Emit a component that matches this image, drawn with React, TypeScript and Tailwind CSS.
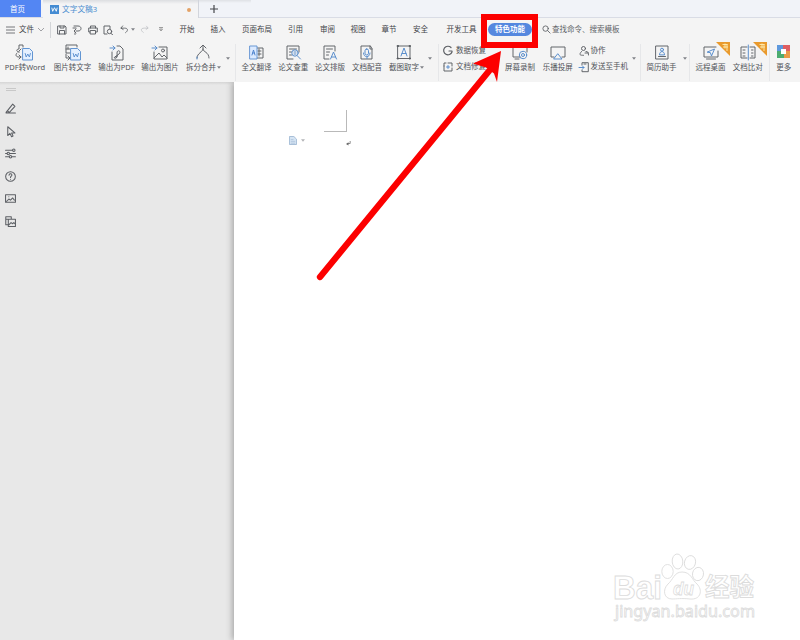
import React from "react";

type Kids = { children?: React.ReactNode };

const Icon = ({ children, className = "h-[18px] w-[20px]", box = "0 0 20 18" }: Kids & { className?: string; box?: string }) => (
  <svg viewBox={box} className={"shrink-0 overflow-visible " + className} fill="none" stroke="#5c5f64" strokeWidth=".95" strokeLinecap="round" strokeLinejoin="round">
    {children}
  </svg>
);

const Small = ({ children, className = "h-[10px] w-[10px]" }: Kids & { className?: string }) => (
  <Icon box="0 0 10 10" className={className}>{children}</Icon>
);

const Caret = ({ className = "" }: { className?: string }) => (
  <svg viewBox="0 0 4 3" className={"h-[3px] w-[4px] shrink-0 " + className}>
    <path d="M0 .3h4L2 2.7z" fill="#808388" />
  </svg>
);

const Tool = ({ label, width, caret, children }: Kids & { label: string; width: string; caret?: boolean }) => (
  <div className={"flex shrink-0 flex-col items-center " + width}>
    {children}
    <div className="relative h-[11px] whitespace-nowrap leading-[11px]">
      {label}
      {caret && <Caret className="absolute -right-[5px] top-[4px]" />}
    </div>
  </div>
);

const Drop = ({ width }: { width: string }) => (
  <div className={"flex h-[28px] shrink-0 items-center justify-center " + width}><Caret /></div>
);

const Sep = () => <div className="h-[37px] w-px shrink-0 bg-[#e6e7e9]" />;

const WordPage = () => (
  <g stroke="#5b8fd0">
    <path d="M8 4.5h6.5l3 3v8.5H8z" fill="#e4f0ff" />
    <path d="M10.2 9.5l1 3.5 1.6-3 1.6 3 1-3.5" />
  </g>
);

const Ribbon = () => (
  <div className="w-[11px] shrink-0">
    <svg viewBox="0 0 14 14" className="h-[14px] w-[14px]">
      <path d="M0 0h14v14z" fill="#e99a2d" />
      <path d="M6.5 2.5h5M7 5h5M9 1.5v5M11 2v7" stroke="#ffedb2" strokeWidth=".9" />
    </svg>
  </div>
);

function TabBar() {
  return (
    <div className="flex h-[18px] shrink-0 border-b border-[#d9dce5] bg-[#f1f3f8]">
      <div className="flex h-[17px] w-[41px] items-center justify-center bg-[#5386f3] pr-[6px] pt-px text-white">首页</div>
      <div className="ml-[2px] flex h-[18px] w-[156px] items-center border-r border-[#d2d5dc] bg-[linear-gradient(#dcdee1,#f4f4f5_4px)] pl-[7px] pt-px text-[#4c8ed0]">
        <svg viewBox="0 0 10 10" className="mr-[3px] h-[9px] w-[9px]"><path d="M0 0h10v10H0z" fill="#448bd2" /><path d="M2 3l1 4 2-4 2 4 1-4" fill="none" stroke="white" /></svg>
        <span className="text-[7.7px]">文字文稿3</span>
        <div className="ml-auto mr-[7px] h-[4px] w-[4px] rounded-full bg-[#e3a267]" />
      </div>
      <div className="flex h-[17px] w-[52px] items-center bg-[linear-gradient(#dfe1e5,#f1f3f8_3px)] pl-[11px] pt-px">
        <svg viewBox="0 0 8 8" className="h-[8px] w-[8px]"><path d="M4 0v8M0 4h8" stroke="#46484c" strokeWidth="1.2" /></svg>
      </div>
    </div>
  );
}

const menus = [
  ["开始", "ml-[16px]"], ["插入", "ml-[16px]"], ["页面布局", "ml-[16.5px]"], ["引用", "ml-[16px]"], ["审阅", "ml-[17px]"],
  ["视图", "ml-[15.5px]"], ["章节", "ml-[16px]"], ["安全", "ml-[16.5px]"], ["开发工具", "ml-[18.5px]"],
];

function MenuRow() {
  return (
    <div className="flex h-[23px] shrink-0 items-center whitespace-nowrap text-[#3f4247]">
      <div className="flex w-[50px] shrink-0 items-center pl-[6px]">
        <svg viewBox="0 0 9 8" className="h-[8px] w-[9px]"><path d="M0 1h9M0 4h9M0 7h9" stroke="#55585d" strokeWidth=".8" /></svg>
        <span className="ml-[4px]">文件</span>
        <svg viewBox="0 0 6 4" className="ml-[4px] h-[4px] w-[6px]"><path d="M0 0l3 3 3-3" fill="none" stroke="#8a8c90" strokeWidth=".8" /></svg>
      </div>
      <div className="h-[16px] w-px shrink-0 bg-[#d3d5d8]" />
      <div className="flex w-[112.5px] shrink-0 items-center pl-[5.5px]">
        <Small><path d="M1 1h7l1 1v7H1zM3 1v2h4V1M2.5 9V5.5h5V9" /></Small>
        <Small className="ml-[5.5px] h-[10px] w-[10px]"><path d="M2 1h4c4 0 4 5 0 5H4M1 3h3M4 4L2 6l2 2M3 8v1.5" /></Small>
        <Small className="ml-[5.5px] h-[10px] w-[10px]"><path d="M2.5 3V1h5v2M2 7H.7V3h8.6v4H8M2.5 5.5h5V9h-5z" /></Small>
        <Small className="ml-[5.5px] h-[10px] w-[10px]"><path d="M4 9H1V1h6v3M8 8.5L9.5 9.5" /><circle cx="6.5" cy="6.5" r="2.2" /></Small>
        <Small className="ml-[7px] h-[9px] w-[9px]"><path d="M3 1L1 3.5 3.5 5M1.2 3.5h4c4 0 4 3 1 5" /></Small>
        <Caret className="ml-[2px]" />
        <svg viewBox="0 0 10 10" className="ml-[5px] h-[9px] w-[9px]" fill="none" stroke="#c4c6c9"><path d="M7 1l2 2.5L6.5 5M9 3.5H5c-5 0-4 3-1 5" /></svg>
        <svg viewBox="0 0 4 5" className="ml-[10px] h-[5px] w-[4px]"><path d="M0 .5h4M.5 2h3L2 4z" stroke="#777" strokeWidth=".7" fill="none" /></svg>
      </div>
      {menus.map(([name, gap]) => <span key={name} className={gap}>{name}</span>)}
      <div className="ml-[11.5px] flex h-[13px] w-[44px] shrink-0 items-center justify-center rounded-full bg-[#5588df] font-bold text-white">特色功能</div>
      <Small className="ml-[10px] h-[9px] w-[9px]"><circle cx="4" cy="4" r="3" /><path d="M6.3 6.3L9 9" /></Small>
      <span className="ml-px text-[#606368]">查找命令、搜索模板</span>
    </div>
  );
}

function Tools() {
  return (
    <div className="flex h-[41px] shrink-0 pt-[3px] text-[#505358]">
      <Tool label="PDF转Word" width="w-[50px]"><Icon><path d="M8 3V1H4v4C1 5 1 8 4 8M4 8v0M6 5l-2 2M2 9c-2 2-1 4 2 4h2M4 11l2 2-2 2" /><WordPage /></Icon></Tool>
      <Tool label="图片转文字" width="w-[45px]"><Icon><path d="M14 3V1H3v8h4M3 5h4M5 3v2M3 10v4h4M5 12l2 2-2 2" /><WordPage /></Icon></Tool>
      <Tool label="输出为PDF" width="w-[43px]"><Icon><path d="M10 2h3l3 3v11H5V8" /><path d="M8 13l4-3c3-3-2-5-2-1 0 3 1 4-1 5s-3-1 1-2" /><path d="M3 4h5M6 2l2 2-2 2" stroke="#5289ca" /></Icon></Tool>
      <Tool label="输出为图片" width="w-[44px]"><Icon><path d="M9 3h8v12H4V8M4 14l5-5 3 4 2-2 3 3" /><circle cx="13" cy="6.5" r="1.5" /><path d="M2 4h5M5 2l2 2-2 2" stroke="#5289ca" /></Icon></Tool>
      <Tool label="拆分合并" width="w-[38px]" caret><Icon><path d="M12 1.5V5c0 3 6 3 6 9M6 14c0-5 6-6 6-9M9 4l3-3 3 3" /><path d="M6 13v2" stroke="#5289ca" /></Icon></Tool>
      <Drop width="w-[15px]" /><Sep />
      <div className="w-[2px] shrink-0" />
      <Tool label="全文翻译" width="w-[37px]"><Icon><path d="M10 4h6v10h-6M11 7h3M11 10h3M12 5v7" /><path d="M3 2h7v13H3z" fill="#dbeaff" stroke="#6294d3" /><path d="M5 11l1.5-5L8 11M5.5 9h2" stroke="#4c82cb" /></Icon></Tool>
      <Tool label="论文查重" width="w-[36.5px]"><Icon><path d="M16 8V2H4v13h6M6.5 5h7M6.5 8h2M6.5 11h2" /><g stroke="#5289ca"><circle cx="12" cy="9" r="3.2" /><path d="M14.5 12l3 3M11 8h2M11 10h2" /></g></Icon></Tool>
      <Tool label="论文排版" width="w-[37px]"><Icon><path d="M15 7V2H4v13h5M6.5 5h6M6.5 8h3M6.5 11h2" /><path d="M10.5 15l3-7 3 7M11.5 13h4" stroke="#5289ca" /></Icon></Tool>
      <Tool label="文档配音" width="w-[37px]"><Icon><path d="M13 2H4v13h11V5zM13 2v3h2" /><g stroke="#5289ca"><rect x="8" y="5" width="3.5" height="6" rx="1.7" /><path d="M6.5 9c0 5 6.5 5 6.5 0M10 13v1.5" /></g></Icon></Tool>
      <Tool label="截图取字" width="w-[37px]" caret><Icon><path d="M4 2h12v12.5H4z" /><path d="M3.5 1.5h1v1h-1zM15.5 1.5h1v1h-1zM3.5 14h1v1h-1zM15.5 14h1v1h-1z" fill="#505358" /><path d="M7 12l3-8 3 8M8 9.5h4" stroke="#5289ca" /></Icon></Tool>
      <Drop width="w-[15.5px]" /><Sep />
      <div className="flex w-[60.5px] shrink-0 flex-col gap-[5px] pl-[4px] pt-px">
        <div className="flex h-[11px] items-center whitespace-nowrap"><Small><path d="M8 1.5A4.3 4.3 0 1 0 9 6V5H6" strokeWidth="1.2" /></Small><span className="ml-[3px]">数据恢复</span></div>
        <div className="flex h-[11px] items-center whitespace-nowrap"><Small><path d="M3 1H1v8h8V6M5 1h4v3M1 4v0" /><path d="M5 3.5v3M3.5 5h3" stroke="#5289ca" /></Small><span className="ml-[3px]">文档修复</span></div>
      </div>
      <Tool label="屏幕录制" width="w-[41px]"><Icon><path d="M10 13H3V3h14v5M5 15h4" /><g stroke="#5289ca"><circle cx="13" cy="11" r="3.7" /><circle cx="13" cy="11" r="1.5" /></g></Icon></Tool>
      <Tool label="乐播投屏" width="w-[34.5px]"><Icon><path d="M6 13H3V3h14v10h-3" /><path d="M10 10l4 5H6z" stroke="#5289ca" /></Icon></Tool>
      <div className="flex w-[53px] shrink-0 flex-col gap-[5px] pl-[3.5px] pt-px">
        <div className="flex h-[11px] items-center whitespace-nowrap"><Small><circle cx="4.5" cy="2.5" r="2" /><path d="M2.5 5.5C-.5 9 1 9.3 4.5 9.3M6 7h3.5M7 5.5c2 0 2.5 1 2.5 3.5" /></Small><span className="ml-[2px]">协作</span></div>
        <div className="flex h-[11px] items-center whitespace-nowrap"><Small><path d="M3 3V.7h6.3v9H3V8M5 2h2" /><path d="M0 5.5h5M3.5 4L5 5.5 3.5 7" stroke="#5289ca" /></Small><span className="ml-[2px]">发送至手机</span></div>
      </div>
      <Drop width="w-[12px]" /><Sep /><div className="w-[2px] shrink-0" />
      <Tool label="简历助手" width="w-[37px]"><Icon><path d="M4 2h12v13H4zM6.5 12.5h7" /><g stroke="#5289ca"><circle cx="10" cy="5.7" r="1.5" /><path d="M7.5 10.5c0-4 5-4 5 0z" /></g></Icon></Tool>
      <Drop width="w-[9px]" /><Sep />
      <Tool label="远程桌面" width="w-[41px]">
        <div className="flex h-[18px] w-[20px]"><Icon><path d="M15 3H3v10h14V7M5.5 15h9" /><path d="M6.5 8l7-3-3 7-1-3z" stroke="#5289ca" /></Icon><div className="-ml-[5px] -mt-[2px]"><Ribbon /></div></div>
      </Tool>
      <Tool label="文档比对" width="w-[33.5px]">
        <div className="flex h-[18px] w-[20px]"><Icon><path d="M9 3H3v11h6M12 3h5v11h-5M5 6h2M5 9h2M5 12h2M13.5 6H15M13.5 9H15M13.5 12H15" /><path d="M10.3 1v15" stroke="#5289ca" /></Icon><div className="-ml-[5px] -mt-[2px]"><Ribbon /></div></div>
      </Tool>
      <div className="w-[4px] shrink-0" /><Sep />
      <Tool label="更多" width="w-[28.5px]">
        <div className="h-[18px] pt-px"><svg viewBox="0 0 13 13" className="h-[13px] w-[13px]"><path d="M0 0h6v4H4v2H0z" fill="#5e99dd" /><path d="M6 0h7v6H9V4H6z" fill="#df5e62" /><path d="M0 6h4v3h3v4H0z" fill="#4cac70" /><path d="M9 6h4v7H7V9h2z" fill="#e99b49" /><path d="M4 4h5v5H4z" fill="white" /></svg></div>
      </Tool>
    </div>
  );
}

function Sidebar() {
  return (
    <aside className="w-[234px] shrink-0 bg-[#e8e8e8] bg-[linear-gradient(#d5d5d5,#e8e8e8_3px)]">
      <div className="flex w-[21px] flex-col items-center">
        <div className="mb-[12px] mt-[6px] h-[3px] w-[10px] border-y border-[#c8c8c8]" />
        <div className="flex flex-col gap-[11.6px]">
          <Small className="h-[11px] w-[11px]"><path d="M1 9h8.5M1 8.5L7 1l2 2-5 5.5-3 .5zM2 7l2 1.5" /></Small>
          <Small className="h-[11px] w-[11px]"><path d="M2.5.7v8l2-2 1.5 3 1.3-.6L6 6.3h3z" /></Small>
          <Small className="h-[11px] w-[11px]"><path d="M.5 2H7M.5 5h1.2M4.3 5h5.2M.5 8h3M6.5 8h3" /><circle cx="8" cy="2" r="1.1" /><circle cx="3" cy="5" r="1.1" /><circle cx="5" cy="8" r="1.1" /></Small>
          <Small className="h-[11px] w-[11px]"><circle cx="5" cy="5" r="4.4" /><path d="M3.7 3.8c.2-2 3-1.5 2.5.2C6 4.8 5 4.8 5 6M5 7.5v0" /></Small>
          <Small className="h-[11px] w-[11px]"><path d="M.5 1.5h9v7h-9zM1.5 7.5l2-2 1.5 1 2-2 1.5 2M3.5 3.5v0" /></Small>
          <Small className="h-[11px] w-[11px]"><path d="M3 8H.7V.7h5v2M.7 3h5M3 3h6.5v6.5H3zM3.5 8l2-2 1.5 1 1-1 1 1" /></Small>
        </div>
      </div>
    </aside>
  );
}

function Watermark() {
  return (
    <svg viewBox="0 0 160 80" className="absolute bottom-[10px] right-[36px] h-[80px] w-[160px]" fill="white" stroke="#dcdcdc" strokeWidth=".9">
      <text x="9" y="48.5" fontFamily="Liberation Sans" fontWeight="700" fontSize="33" textLength="49" lengthAdjust="spacingAndGlyphs">Bai</text>
      <ellipse cx="63.5" cy="21.5" rx="5.7" ry="7" /><ellipse cx="73.5" cy="11.5" rx="5.3" ry="7.5" transform="rotate(-5 73.5 11.5)" /><ellipse cx="86" cy="12.5" rx="5.5" ry="7" transform="rotate(15 86 12.5)" /><ellipse cx="94" cy="24" rx="5.5" ry="6.7" transform="rotate(10 94 24)" />
      <path d="M78 22c-8 0-9 8-14 12-6 6-4 15 4 15 5 0 9-1 18 0 11 1 13-9 7-15-5-4-6-12-15-12z" />
      <text x="69" y="45" fontFamily="Liberation Sans" fontWeight="700" fontStyle="italic" fontSize="19" textLength="21" lengthAdjust="spacingAndGlyphs" strokeWidth=".8">du</text>
      <text x="101" y="46" fontFamily="Noto Sans CJK SC" fontWeight="700" fontSize="24.5">经验</text>
      <text x="11" y="67" fontFamily="Noto Sans" fontSize="15.5" textLength="140" lengthAdjust="spacingAndGlyphs" strokeWidth=".8">jingyan.baidu.com</text>
    </svg>
  );
}

export default function App() {
  return (
    <div className="relative flex h-[640px] w-[800px] flex-col overflow-hidden bg-[#f4f4f4] font-['Noto_Sans','Noto_Sans_CJK_SC',sans-serif] text-[7.5px] leading-[11px]">
      <TabBar />
      <MenuRow />
      <Tools />
      <div className="flex min-h-0 flex-1">
        <Sidebar />
        <main className="relative flex-1 bg-white shadow-[-2px_0_6px_#a8a8a8] [clip-path:inset(0_0_0_-12px)]">
          <div className="ml-[90px] mt-[28px] h-[22px] w-[23px] border-b border-r border-[#b9b9b9]" />
          <div className="ml-[55px] mt-[4px] flex h-[13px] items-start">
            <svg viewBox="0 0 9 10" className="h-[9px] w-[8px]"><path d="M.5.5h5l3 3v6h-8z" fill="#d5e4f3" stroke="#9fb8d3" /><path d="M2 4h3M2 6h5M2 8h5" stroke="#9fb8d3" strokeWidth=".7" /></svg>
            <Caret className="ml-[4px] mt-[3px] opacity-60" />
            <svg viewBox="0 0 6 6" className="ml-[41px] mt-[5px] h-[5px] w-[5px]"><path d="M5 0v3H2" fill="none" stroke="#777" /><path d="M0 3.5l3-2v4z" fill="#666" /></svg>
          </div>
          <Watermark />
        </main>
      </div>
      <div className="absolute left-[480.5px] top-[13.5px] h-[34px] w-[57px] border-[6px] border-[#fc0000]" />
      <svg viewBox="0 0 200 240" className="absolute left-[310px] top-[45px] h-[240px] w-[200px]" fill="#fc0000">
        <path d="M10 232L179 26" stroke="#fc0000" strokeWidth="6.3" strokeLinecap="round" />
        <path d="M191 6L163 18.5l13 4 8 6L187 37z" />
      </svg>
    </div>
  );
}
